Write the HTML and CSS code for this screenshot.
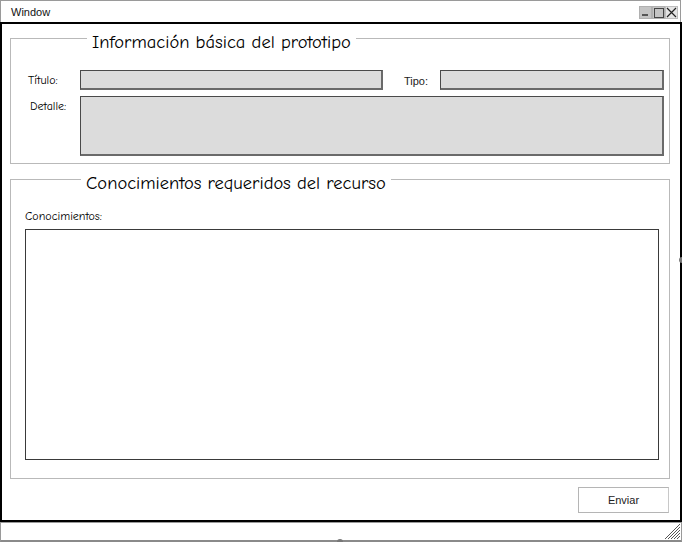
FILE: index.html
```
<!DOCTYPE html>
<html lang="es">
<head>
<meta charset="utf-8">
<title>Window</title>
<link rel="stylesheet" href="styles.css">
</head>
<body>
<div class="window">
  <div class="titlebar">
    <span class="title">Window</span>
    <div class="controls">
      <span class="ctl ctl-min"></span>
      <span class="ctl ctl-max"><span class="sq"></span></span>
      <span class="ctl ctl-close">
        <svg width="11" height="11" viewBox="0 0 11 11"><path d="M1 1 L10 10 M10 1 L1 10" stroke="#222" stroke-width="1.2" fill="none"/></svg>
      </span>
    </div>
  </div>
  <div class="content">
    <fieldset class="group group-info">
      <legend class="legend legend-info">Información básica del prototipo</legend>
      <div class="info-grid">
        <span class="label label-titulo">Título:</span>
        <div class="field field-titulo"></div>
        <span class="label-tipo">Tipo:</span>
        <div class="field field-tipo"></div>
        <span class="label label-detalle">Detalle:</span>
        <div class="field field-detalle"></div>
      </div>
    </fieldset>
    <fieldset class="group group-con">
      <legend class="legend legend-con">Conocimientos requeridos del recurso</legend>
      <div class="label label-con">Conocimientos:</div>
      <div class="con-box"></div>
    </fieldset>
    <div class="actions">
      <button class="btn">Enviar</button>
    </div>
  </div>
  <div class="statusbar">
    <svg class="grip" width="17" height="17" viewBox="0 0 17 17">
      <path d="M16 1 L1 16 M16 4 L4 16 M16 7 L7 16 M16 10 L10 16 M16 13 L13 16" stroke="#555" stroke-width="1" fill="none"/>
    </svg>
  </div>
  <span class="dot dot-bottom"></span>
  <span class="dot dot-right"></span>
</div>
</body>
</html>
```
FILE: styles.css
```
html, body {
  margin: 0;
  padding: 0;
  background: #fff;
}
.window {
  position: relative;
  width: 682px;
  height: 542px;
  display: flex;
  flex-direction: column;
  overflow: hidden;
}
.titlebar {
  height: 22px;
  box-sizing: border-box;
  border: 1px solid #9a9a9a;
  border-bottom: none;
  margin-right: 1px;
  display: flex;
  align-items: center;
  justify-content: space-between;
  padding-left: 10px;
  padding-right: 2px;
  font-family: "Liberation Sans", Arial, sans-serif;
  font-size: 11px;
  color: #111;
}
.controls {
  display: flex;
  margin-top: 2px;
}
.ctl {
  width: 13px;
  height: 13px;
  box-sizing: border-box;
  display: flex;
  align-items: center;
  justify-content: center;
  position: relative;
}
.ctl-min, .ctl-max {
  background: #c4c4c4;
  border: 1px solid #b0b0b0;
}
.ctl-min::after {
  content: "";
  position: absolute;
  left: 2px;
  right: 3px;
  bottom: 2px;
  height: 2px;
  background: #555;
}
.ctl-max .sq {
  width: 8px;
  height: 8px;
  border: 1px solid #444;
}
.ctl-close {
  background: #e4e4e4;
  border: 1px solid #bdbdbd;
}
.content {
  flex: 1;
  border: 2px solid #000;
  padding: 0 10px 0 8px;
  display: flex;
  flex-direction: column;
}
.group {
  margin: 0;
  padding: 0;
  border: 1px solid #b9b9b9;
  min-width: 0;
}
.legend {
  font-family: "Comic Sans MS", "Comic Neue", "Noto Sans", sans-serif;
  font-size: 18.5px;
  color: #000;
  padding: 8px 5px 0;
  line-height: 20px;
}
.legend-info {
  margin-left: 76px;
}
.legend-con {
  margin-left: 56px;
}
.info-grid {
  display: grid;
  grid-template-columns: 69px 1fr 57px 224px;
  grid-template-rows: 20px 60px;
  row-gap: 6px;
  padding: 18px 5px 7px 0;
}
.label {
  font-family: "Comic Sans MS", "Comic Neue", "Noto Sans", sans-serif;
  font-size: 12px;
  color: #000;
}
.label-titulo {
  padding-left: 17px;
  align-self: center;
}
.label-detalle {
  padding-left: 19px;
  padding-top: 3px;
}
.label-tipo {
  font-family: "Liberation Sans", Arial, sans-serif;
  font-size: 11px;
  color: #222;
  padding-left: 21px;
  align-self: center;
  padding-top: 2px;
}
.field {
  box-sizing: border-box;
  background: #dcdcdc;
  border: 1px solid #4a4a4a;
  border-right: 2px solid #6a6a6a;
  border-bottom: 2px solid #6a6a6a;
}
.field-detalle {
  grid-column: 2 / 5;
}
.group-con {
  margin-top: 1px;
  padding: 0 10px 18px 14px;
}
.label-con {
  margin-top: 16px;
  line-height: 14px;
}
.con-box {
  margin-top: 6px;
  height: 231px;
  box-sizing: border-box;
  border: 1px solid #3a3a3a;
  background: #fff;
}
.actions {
  display: flex;
  justify-content: flex-end;
  margin-top: 8px;
  padding-right: 1px;
}
.btn {
  width: 91px;
  height: 26px;
  box-sizing: border-box;
  background: #fff;
  border: 1px solid #b5b5b5;
  border-right-color: #c8c8c8;
  font-family: "Liberation Sans", Arial, sans-serif;
  font-size: 11px;
  color: #222;
  padding: 0;
}
.statusbar {
  height: 20px;
  box-sizing: border-box;
  border: 1px solid #9a9a9a;
  border-bottom: 2px solid #8a8a8a;
  position: relative;
}
.grip {
  position: absolute;
  right: 0;
  bottom: 0;
}
.dot {
  position: absolute;
  width: 6px;
  height: 6px;
  border-radius: 50%;
  background: #777;
}
.dot-bottom {
  left: 337px;
  bottom: -3px;
}
.dot-right {
  right: -3px;
  top: 257px;
}
```
